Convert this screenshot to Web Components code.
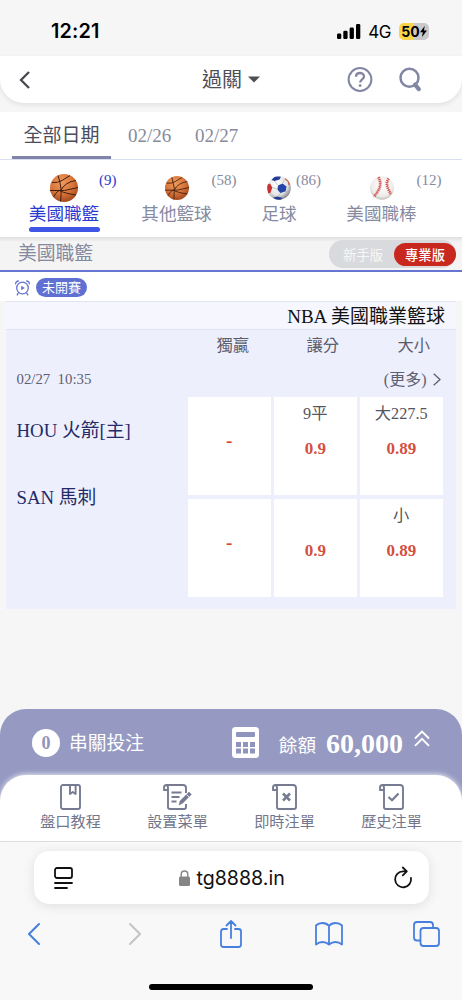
<!DOCTYPE html>
<html lang="zh-Hant">
<head>
<meta charset="utf-8">
<meta name="viewport" content="width=device-width, initial-scale=1">
<title>過關</title>
<style>
html,body{margin:0;padding:0}
body{width:462px;height:1000px;overflow:hidden;background:#f6f6f6;font-family:"Liberation Serif","Noto Sans CJK TC",serif;color:#555;font-weight:400}
</style>
</head>
<body>
<app-screen></app-screen>
<script>
const define = (name, css, html) => {
  const tpl = document.createElement('template');
  tpl.innerHTML = `<style>*{box-sizing:border-box}:host{display:block;box-sizing:border-box;white-space:nowrap}svg{display:block;flex:none;overflow:visible}${css}</style>${html}`;
  customElements.define(name, class extends HTMLElement {
    constructor() {
      super();
      this.attachShadow({ mode: 'open' }).append(tpl.content.cloneNode(true));
    }
  });
};

/* ---------- status bar ---------- */
define('status-bar', `
:host{height:56px;display:flex;align-items:center;padding:6px 33px 0 51px;font-family:Inter,sans-serif;color:#000}
.time{font-size:19.8px;font-weight:600;line-height:24px;flex:1;letter-spacing:.15px}
.net{font-size:17px;line-height:20px;margin:1px 8px 0 7px;letter-spacing:-.4px}
.bat{width:30px;height:17px;border-radius:5px;background:linear-gradient(90deg,#f8d448 50%,#c9c9c9 50%);display:flex;align-items:center;justify-content:center;font-size:14px;font-weight:700;line-height:17px}
`, `<span class="time">12:21</span>
<svg width="24" height="15" viewBox="0 0 24 15"><rect x="0" y="9.5" width="4.3" height="5.5" rx="1.3"/><rect x="6.3" y="6.8" width="4.3" height="8.2" rx="1.3"/><rect x="12.6" y="3.6" width="4.3" height="11.4" rx="1.3"/><rect x="19" y="0" width="4.3" height="15" rx="1.3"/></svg>
<span class="net">4G</span>
<span class="bat">50<svg width="7" height="11" viewBox="0 0 7 11"><path d="M4.7 0 0 6.2h2.8L2 11 7 4.6H4z"/></svg></span>`);

/* ---------- title bar ---------- */
define('title-bar', `
:host{height:47px;background:#fff;border-radius:0 0 24px 24px;box-shadow:0 2px 5px rgba(0,0,0,.09);display:grid;grid-template-columns:202px 145px 52px 43px;align-items:center;padding:0 20px 0 0}
.back{padding-left:19px}
.title{display:flex;align-items:center;font-size:20px;line-height:24px;color:#4e4e55}
.title svg{margin:0 0 0 6px}
`, `<svg class="back" width="32" height="18" viewBox="0 0 13 18" fill="none" stroke="#48484f" stroke-width="2.3"><path d="M10 1 2 9l8 8"/></svg>
<div class="title"><span>過關</span><svg width="12" height="7" viewBox="0 0 12 7" fill="#4e4e55"><path d="M0 .5h12L6 6.5z"/></svg></div>
<svg width="26" height="26" viewBox="0 0 26 26" fill="none" stroke="#8286a3" stroke-width="2"><circle cx="13" cy="12.5" r="11.4"/><path d="M9 9.700c0-5 8-4.800 8-.3 0 3-3.800 3-3.800 6.200" stroke-width="2.3"/><circle cx="13.1" cy="18.600" r="1.4" fill="#8286a3" stroke="none"/></svg>
<svg width="24" height="26" viewBox="0 0 24 26" fill="none" stroke="#8286a3"><circle cx="10.500" cy="10.800" r="9" stroke-width="2.5"/><path d="m16 17.500 3.800 4.600" stroke-width="4.200" stroke-linecap="round"/></svg>`);

/* ---------- dates ---------- */
define('date-tabs', `
:host{margin-top:9px;height:48px;background:#fff;border-bottom:1px solid #d9def0;display:flex;align-items:stretch;padding-left:12px;font-size:19px;line-height:47px;color:#888b9c}
.on{width:99px;text-align:center;color:#4b4d5b;border-bottom:3px solid #8184a9;height:46.5px;line-height:47px;margin-right:17px}
.d{width:67px}
`, `<span class="on">全部日期</span><span class="d">02/26</span><span class="d">02/27</span>`);

/* ---------- balls ---------- */
define('basket-ball', ``, `<svg width="100%" height="100%" viewBox="0 0 28 28"><defs><radialGradient id="g" cx=".42" cy=".3" r=".75"><stop offset="0" stop-color="#ee9a5c"/><stop offset=".55" stop-color="#d8743a"/><stop offset="1" stop-color="#9c431c"/></radialGradient></defs><circle cx="14" cy="14" r="14" fill="url(#g)"/><g fill="none" stroke="#42200f" stroke-width="1"><path d="M0 16.500Q15 18 28 13.500M2 8.500Q8 9 12 6.500T20 1.600M8 1.500Q12.500 14 10.500 27.500M10.500 16.800Q15 8 26 6.500M3.500 23Q8 15 10.800 17T26 21"/></g></svg>`);
define('soccer-ball', ``, `<svg width="100%" height="100%" viewBox="0 0 24 24"><defs><radialGradient id="g" cx=".4" cy=".35" r=".7"><stop offset="0" stop-color="#fff"/><stop offset=".65" stop-color="#e4e4e6"/><stop offset="1" stop-color="#77777c"/></radialGradient><clipPath id="c"><circle cx="12" cy="12" r="11.8"/></clipPath></defs><circle cx="12" cy="12" r="11.8" fill="url(#g)"/><g clip-path="url(#c)"><path d="m11 9.5 4.5-2 4 3-.8 4.8-5.2 1.8-3-3.4z" fill="#2444a8"/><path d="M4.5 4 8 0l6 .5-1.500 3-5 1.500zM6.500 21.500l4-1 5 1.500L13 25H8z" fill="#243c96"/><path d="m-1 9 4-1.500 2.300 4-1.800 5.300L0 18z" fill="#c93030"/><path d="m18 2.500 3.600 3 .6 3.500" fill="none" stroke="#cc6548" stroke-width="1.600"/><path d="M5.300 11.500 10.500 13M7.500 5l3.500 4.500M15.500 7.500l1.800-4M18.700 15.300l3.800 1.200M13.500 17l-3 4M3.500 16.800l4 4" stroke="#aaaab0" stroke-width=".6"/></g></svg>`);
define('base-ball', ``, `<svg width="100%" height="100%" viewBox="0 0 24 24"><defs><radialGradient id="g" cx=".5" cy=".4" r=".6"><stop offset="0" stop-color="#fff"/><stop offset=".75" stop-color="#efedeb"/><stop offset="1" stop-color="#c2beba"/></radialGradient></defs><circle cx="12" cy="12" r="11.8" fill="url(#g)"/><g fill="none" stroke="#d65454"><path d="M8.5 1.2Q12 8 8.600 14T3.600 20M18.600 2.600Q15.500 7 18 12.500T21 18" stroke-width="3" stroke-dasharray="1 .9"/><path d="M8.500 1.200Q12 8 8.600 14T3.600 20M18.600 2.600Q15.500 7 18 12.500T21 18" stroke-width=".8"/></g></svg>`);

/* ---------- sports ---------- */
define('sport-tab', `
:host{position:relative;display:flex;flex-direction:column;align-items:center;color:#868a9f}
:host([on]){color:#2a38cf}
.ball{height:28px;display:flex;align-items:center;justify-content:center;margin-top:1px}
::slotted([slot=ball]){width:24px;height:24px}
:host([on]) ::slotted([slot=ball]){width:28px;height:28px}
.name{font-size:17.6px;line-height:24px}
.line{height:5px;border-radius:3px;width:71px;margin-top:1px}
:host([on]) .line{background:#3f55e6}
.count{position:absolute;top:-2px;left:calc(50% + var(--cx,35px));font-size:15px;line-height:18px}
`, `<span class="ball"><slot name="ball"></slot></span><span class="name"><slot></slot></span><span class="line"></span><span class="count"><slot name="count"></slot></span>`);
define('sport-tabs', `
:host{height:77px;background:#fff;display:grid;justify-content:start;padding:13px 0 0 25px;grid-template-columns:78px 147px 58px 147px}
`, `<sport-tab on><basket-ball slot="ball"></basket-ball>美國職籃<span slot="count">(9)</span></sport-tab>
<sport-tab><basket-ball slot="ball"></basket-ball>其他籃球<span slot="count">(58)</span></sport-tab>
<sport-tab style="--cx:17px"><soccer-ball slot="ball"></soccer-ball>足球<span slot="count">(86)</span></sport-tab>
<sport-tab><base-ball slot="ball"></base-ball>美國職棒<span slot="count">(12)</span></sport-tab>`);

/* ---------- section heading ---------- */
define('section-bar', `
:host{height:35px;background:linear-gradient(#dedede,#f4f4f4 5px);border-bottom:2.500px solid #6674d2;display:flex;align-items:center;justify-content:space-between;padding-left:18px;font-size:18.8px;line-height:28px;color:#85899e}
.sw{width:127px;height:28px;margin-top:1px;border-radius:14px;background:#d9dadd;display:flex;align-items:center;justify-content:flex-end;margin-right:6px;font-size:13.3px;color:#f7f7f7}
.off{margin-right:11px;padding-top:3px}
.on{width:62px;height:23px;line-height:25px;border-radius:12px;background:#c9281f;text-align:center;color:#fff;font-weight:500}
`, `<span>美國職籃</span><span class="sw"><span class="off">新手版</span><span class="on">專業版</span></span>`);

/* ---------- kick-off state ---------- */
define('state-row', `
:host{height:29px;background:#fff;display:flex;align-items:center;padding:2px 0 0 15px}
.pill{margin-left:6px;width:51px;height:19px;border-radius:10px;background:#5f6fd2;color:#fff;font-size:13px;line-height:19px;text-align:center}
`, `<svg width="15" height="16" viewBox="0 0 15 16" fill="none" stroke="#6472cf" stroke-width="1.3"><circle cx="7.5" cy="8" r="5.8"/><path d="M.6 4.400Q.4 1.200 3.800 1M14.400 4.400Q14.600 1.200 11.200 1M3.400 12.800 2 15.400M11.600 12.800l1.400 2.600"/><path d="m6.200 5.700 3.600 2.300-3.600 2.300z" fill="#6472cf" stroke="none"/></svg><span class="pill">未開賽</span>`);

/* ---------- odds ---------- */
define('odds-cell', `
:host{height:98px;background:#fff;display:flex;flex-direction:column;align-items:center;padding-top:7px;color:#55555b}
.line{height:20px;font-size:16.300px;line-height:20px}
.odd{font-size:17px;line-height:20px;font-weight:700;color:#d2503f;margin-top:14.500px}
:host([empty]) .odd{margin-top:7px;font-size:19px;color:#dc4330}
`, `<span class="line"><slot name="line"></slot></span><span class="odd"><slot></slot></span>`);
define('match-card', `
:host{width:450px;height:307.500px;margin-left:6px;background:#edeffd}
.league{height:29px;border-top:1px solid #e2e4ef;border-bottom:1px solid #dfe3f3;background:#f5f6fe;text-align:right;padding-right:11px;font-size:19px;line-height:29px;color:#111}
.body{display:grid;grid-template-columns:178.500px repeat(3,82.500px);column-gap:3.500px;grid-template-rows:30px 37px 98px 102px}
.h{text-align:center;font-size:16.300px;line-height:31px;color:#5b5d6b}
.h:nth-child(2){padding-left:7px}.h:nth-child(3){padding-left:15px}.h:nth-child(4){padding-left:25px}
.time{padding-left:10.500px;font-size:14.800px;line-height:39px;color:#5d6070;white-space:pre}
.more{grid-column:2/5;display:flex;justify-content:flex-end;align-items:center;font-size:16px;line-height:24px;color:#5d6070;padding:2px 2px 0 0}
.more svg{margin-left:6px}
.teams{grid-row:3/5;padding:23px 0 0 10.500px;font-size:18.800px;line-height:22px;color:#242a68;display:flex;flex-direction:column;gap:45px}
odds-cell:nth-of-type(n+4){margin-top:4px}
`, `<div class="league">NBA 美國職業籃球</div>
<div class="body"><span></span><span class="h">獨贏</span><span class="h">讓分</span><span class="h">大小</span>
<span class="time">02/27&nbsp; 10:35</span><span class="more">(更多)<svg width="8" height="13" viewBox="0 0 8 13" fill="none" stroke="#5d6070" stroke-width="1.300"><path d="m.7.7 6.300 5.800-6.300 5.800"/></svg></span>
<div class="teams"><span>HOU 火箭[主]</span><span>SAN 馬刺</span></div>
<odds-cell empty>-</odds-cell><odds-cell><span slot="line">9平</span>0.9</odds-cell><odds-cell><span slot="line">大227.5</span>0.89</odds-cell>
<odds-cell empty>-</odds-cell><odds-cell>0.9</odds-cell><odds-cell><span slot="line">小</span>0.89</odds-cell></div>`);

/* ---------- bet slip summary ---------- */
define('bet-bar', `
:host{margin-top:100.500px;height:100px;background:#969ac2;border-radius:26px 26px 0 0;padding:0 32px;display:flex;align-items:flex-start;color:#fff}
.n{width:28px;height:28px;margin-top:20px;border-radius:50%;background:#fff;color:#8f94bc;font-weight:700;font-size:18px;line-height:28px;text-align:center}
.s{font-size:18.800px;line-height:24px;margin:23px 0 0 9px;flex:1}
.b{font-size:18.600px;line-height:24px;margin:25px 10px 0 19px}
.m{font-size:28px;line-height:32px;font-weight:700;margin:19px 11px 0 0}
.calc{margin:18px 1px 0 0}.up{margin-top:21px}
`, `<span class="n">0</span><span class="s">串關投注</span>
<svg class="calc" width="27" height="31" viewBox="0 0 27 31"><rect width="27" height="31" rx="3.500" fill="#fff"/><g fill="#8f94bc"><rect x="4" y="5" width="19" height="5" rx="1"/><path d="M4 15h5v5H4zM11 15h5v5h-5zM18 15h5v5h-5zM4 21.500h5v5H4zM11 21.500h5v5h-5zM18 21.500h5v5h-5z"/></g></svg>
<span class="b">餘額</span><span class="m">60,000</span>
<svg class="up" width="16" height="17" viewBox="0 0 16 17" fill="none" stroke="#fff" stroke-width="1.900"><path d="m1 8.500 7-7 7 7M1 15.800l7-7 7 7"/></svg>`);

/* ---------- page menu ---------- */
define('menu-item', `
:host{display:flex;flex-direction:column;align-items:center;font-size:15.200px;line-height:20px;color:#73778c}
.i{height:28px}
`, `<span class="i"><slot name="icon"></slot></span><slot></slot>`);
define('page-menu', `
:host{position:relative;margin-top:-34px;height:67px;background:#fff;border-radius:26px 26px 0 0;box-shadow:0 -1px 5px rgba(255,255,255,.75);border-bottom:1px solid #dcdcdc;display:grid;grid-template-columns:repeat(4,107px);padding:9px 0 0 17px}
svg{fill:none;stroke:#777b92;stroke-width:1.900;stroke-linejoin:round}
`, `<menu-item><svg slot="icon" width="21" height="26" viewBox="0 0 21 26"><rect x="1" y="1" width="19" height="24" rx="2"/><path d="M10 1v9l2.800-2 2.800 2V1"/></svg>盤口教程</menu-item>
<menu-item><svg slot="icon" width="29" height="26" viewBox="0 0 29 26"><path d="M5 6H1V3.500Q1 1 3.500 1H20q3 0 3 3v5M23 20v3q0 2-2 2H7q-2 0-2-2V4Q5 1 3 1"/><path d="M8.500 8.500h10M8.500 13h8M8.500 17.500h5"/><path d="m16 21 1-4 9-9 2.400 2.400-8.800 8.800z" fill="#777b92" stroke-width=".5"/><path d="m23.500 10.500 2.500 2.400" stroke="#fff" stroke-width=".9"/></svg>設置菜單</menu-item>
<menu-item><svg slot="icon" width="25" height="26" viewBox="0 0 25 26"><path d="M5 6H1V3.500Q1 1 3.500 1H21q3 0 3 3v19q0 2-2 2H7q-2 0-2-2V4Q5 1 3 1"/><path d="m11 9.500 7 7m0-7-7 7" stroke-width="2.600"/></svg>即時注單</menu-item>
<menu-item><svg slot="icon" width="25" height="26" viewBox="0 0 25 26"><path d="M5 6H1V3.500Q1 1 3.500 1H21q3 0 3 3v19q0 2-2 2H7q-2 0-2-2V4Q5 1 3 1"/><path d="m9.500 13 3.500 3.300 6.500-6.800" stroke-width="2.200"/></svg>歷史注單</menu-item>`);

/* ---------- browser controls ---------- */
define('browser-bar', `
:host{height:158px;background:#f8f8f8;padding:9px 0 0;font-family:Inter,sans-serif}
.url{margin:0 33.500px;height:53px;border-radius:15px;background:#fff;box-shadow:0 2px 12px rgba(0,0,0,.1);display:grid;grid-template-columns:125px 1fr 18px;align-items:center;padding:0 17px 0 20px;color:#111;font-size:19.600px;line-height:24px}
.host{display:flex;align-items:center;gap:7px}
.tools{height:30px;margin-top:15px;display:grid;grid-template-columns:101px 91px 95px 98px 27px;align-items:center;padding:0 0 0 28px;--b:#477fde}
.home{width:164px;height:6px;border-radius:3px;background:#000;margin:35px auto 0}
svg{fill:none;stroke-linecap:round;stroke-linejoin:round}
`, `<div class="url"><svg width="19" height="22" viewBox="0 0 19 22" stroke="#111" stroke-width="1.800"><rect x="1" y="1" width="17" height="10" rx="2"/><path d="M1 16h17M1 21h12"/></svg>
<span class="host"><svg width="11" height="16" viewBox="0 0 11 16"><rect y="6.500" width="11" height="9.500" rx="1.500" fill="#858585"/><path d="M2.200 7V4.300Q2.200 1 5.500 1t3.300 3.300V7" stroke="#858585" stroke-width="1.400"/></svg><span>tg8888.in</span></span>
<svg width="18" height="22" viewBox="0 0 18 22" stroke="#111" stroke-width="1.800"><path d="M17 11A8 8 0 1 1 9 4.300H12.500M8.800.5l4 3.800-4 4"/></svg></div>
<div class="tools">
<svg width="12" height="22" viewBox="0 0 12 22" stroke="var(--b)" stroke-width="2"><path d="M11 1 1 11l10 10"/></svg>
<svg width="12" height="22" viewBox="0 0 12 22" stroke="#c4c4c6" stroke-width="2"><path d="m1 1 10 10L1 21"/></svg>
<svg width="22" height="28" viewBox="0 0 22 28" stroke="var(--b)" stroke-width="1.800"><path d="M7 9H3.500Q1 9 1 11.500v13Q1 27 3.500 27h15q2.500 0 2.500-2.500v-13Q21 9 18.500 9H15M11 18V1.200M6.500 5.500 11 1l4.500 4.500"/></svg>
<svg width="28" height="24" viewBox="0 0 28 24" stroke="var(--b)" stroke-width="1.800"><path d="M14 4Q11.500 1 7.500 1T1 3.500V22.500Q4 20 7.500 20T14 22.500Q17 20 20.500 20T27 22.500V3.500Q24.500 1 20.500 1T14 4V22"/></svg>
<svg width="27" height="26" viewBox="0 0 27 26" stroke="var(--b)" stroke-width="1.800"><rect x="7.500" y="7" width="18.500" height="18" rx="3"/><path d="M7 19.500H4Q1 19.500 1 16.500V4Q1 1 4 1h13q3 0 3 3v2.500"/></svg>
</div><div class="home"></div>`);

define('app-screen', ``, `<status-bar></status-bar><title-bar></title-bar><date-tabs></date-tabs><sport-tabs></sport-tabs><section-bar></section-bar><state-row></state-row><match-card></match-card><bet-bar></bet-bar><page-menu></page-menu><browser-bar></browser-bar>`);
</script>
</body>
</html>
